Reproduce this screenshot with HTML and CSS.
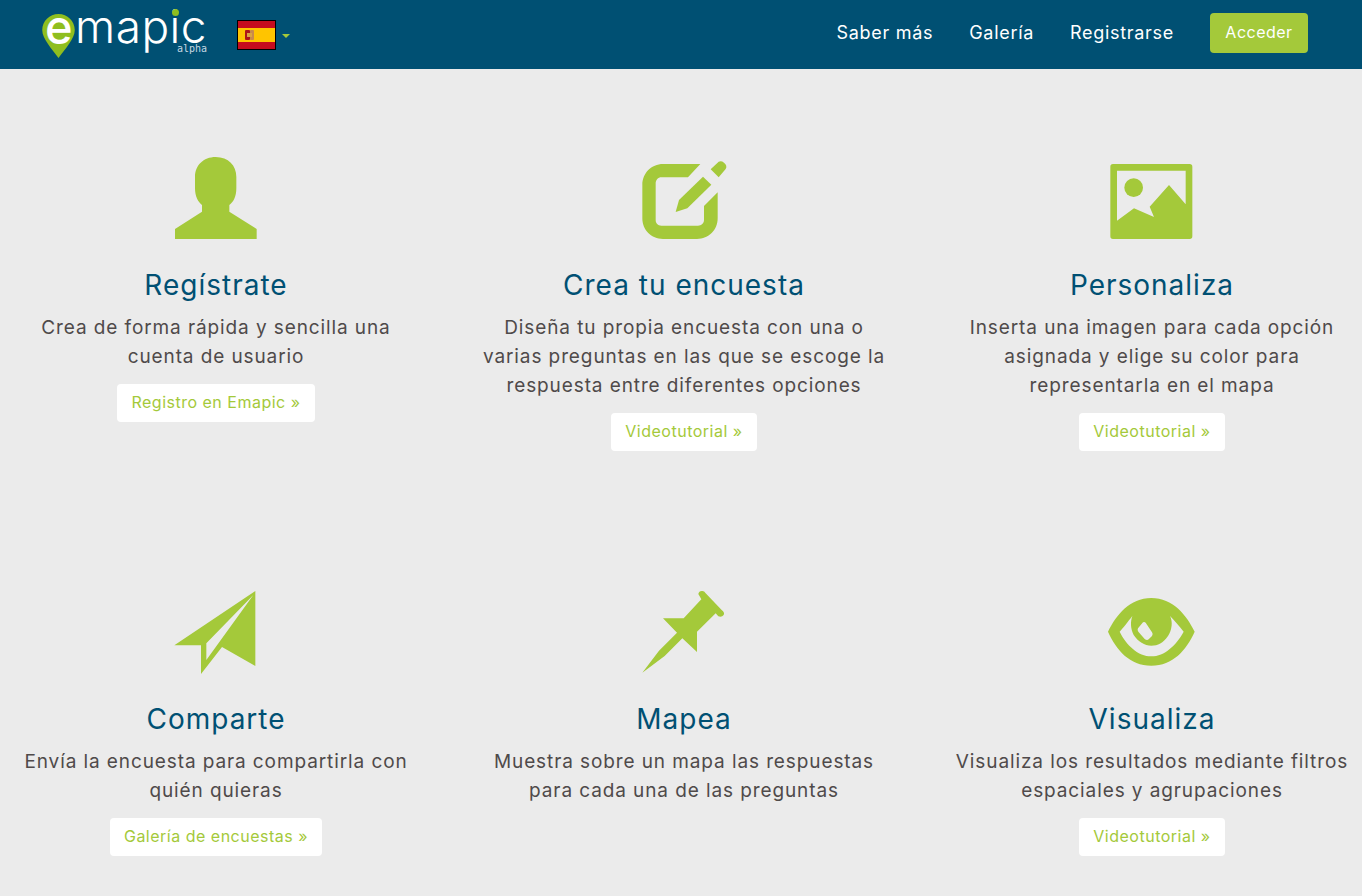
FILE: index.html
```html
<!DOCTYPE html>
<html lang="es">

<head>
    <meta charset="UTF-8">
    <meta name="viewport" content="width=device-width, initial-scale=1.0">
    <title>Emapic</title>
    <link rel="stylesheet" href="styles.css">
</head>

<body>
    <header class="navbar">
        <a class="logo" href="#">
            <svg class="logo-pin" viewBox="0 0 34 46">
                <path d="M17 0C7.6 0 0 7.4 0 16.6 0 26 10 36 17 46 24 36 34 26 34 16.6 34 7.4 26.4 0 17 0Z" />
            </svg>
            <span class="logo-e">e</span>
            <span class="logo-name">map<span class="logo-i">i</span>c</span>
            <span class="logo-alpha">alpha</span>
        </a>
        <a class="lang" href="#">
            <svg class="flag" viewBox="0 0 39 30">
                <rect width="39" height="30" fill="#000" />
                <rect x="1" y="1" width="37" height="28" fill="#c60b1e" />
                <rect x="1" y="8" width="37" height="14" fill="#ffc400" />
                <rect x="8" y="10" width="5" height="10" rx="1" fill="#ad1519" />
                <rect x="13" y="10" width="4" height="10" rx="1" fill="#c98a4b" />
                <rect x="10" y="13" width="5" height="4" fill="#d9a441" />
            </svg>
            <span class="caret"></span>
        </a>
        <nav class="nav">
            <a href="#">Saber más</a>
            <a href="#">Galería</a>
            <a href="#">Registrarse</a>
            <a class="login" href="#">Acceder</a>
        </nav>
    </header>

    <main class="features">
        <section class="feature">
            <svg class="icon" viewBox="3 0 390 315">
                <path d="M197 36C160 36 135 62 135 95V130C135 155 145 172 156 180V200L75 252V282H320V252L238 200V180C250 172 259 155 259 130V95C259 62 235 36 197 36Z" />
            </svg>
            <h2>Regístrate</h2>
            <p>Crea de forma rápida y sencilla una cuenta de usuario</p>
            <a class="more" href="#">Registro en Emapic »</a>
        </section>
        <section class="feature">
            <svg class="icon" viewBox="-2 0 390 315">
                <path d="M242 57H130C95 57 68 85 68 120V220C68 255 95 282 130 282H232C267 282 294 255 294 220V142L253 183V225C253 235 245 242 235 242H125C115 242 108 235 108 225V115C108 105 115 97 125 97H205Z" />
                <path d="M250 95L275 119L203 190L168 201L178 165Z" />
                <path d="M273 73L297 50Q305 46 313 53Q324 62 318 72L297 97Z" />
            </svg>
            <h2>Crea tu encuesta</h2>
            <p>Diseña tu propia encuesta con una o varias preguntas en las que se escoge la respuesta entre diferentes opciones</p>
            <a class="more" href="#">Videotutorial »</a>
        </section>
        <section class="feature">
            <svg class="icon" viewBox="-8 0 390 315">
                <path fill-rule="evenodd" d="M70 57H300Q308 57 308 65V274Q308 282 300 282H70Q62 282 62 274V65Q62 57 70 57ZM82 77V227L133 190L193 216L180 185L238 120L288 178V77Z" />
                <circle cx="132" cy="128" r="28" />
            </svg>
            <h2>Personaliza</h2>
            <p>Inserta una imagen para cada opción asignada y elige su color para representarla en el mapa</p>
            <a class="more" href="#">Videotutorial »</a>
        </section>
        <section class="feature">
            <svg class="icon" viewBox="3 -3 390 315">
                <path fill-rule="evenodd" d="M316 33L73 196H153V282L216 201L316 258ZM310 45L169 190V240Z" />
            </svg>
            <h2>Comparte</h2>
            <p>Envía la encuesta para compartirla con quién quieras</p>
            <a class="more" href="#">Galería de encuestas »</a>
        </section>
        <section class="feature">
            <svg class="icon" viewBox="-2 -3 390 315">
                <path d="M245 58L192 115H130L172 158L118 212L68 278L135 228L188 175L232 216V155L288 100L296 109Q306 113 312 105Q316 98 306 90L258 40Q254 33 248 33Q238 32 236 42Z" />
            </svg>
            <h2>Mapea</h2>
            <p>Muestra sobre un mapa las respuestas para cada una de las preguntas</p>
        </section>
        <section class="feature">
            <svg class="icon" viewBox="-8 -3 390 315">
                <path fill-rule="evenodd" d="M185 54C250 54 290 105 315 155C290 210 250 257 185 257C120 257 80 210 55 155C80 105 120 54 185 54ZM128 108C115 125 100 145 90 155C110 195 145 229 185 229C225 229 260 195 282 155C270 140 255 122 241 108C250 125 247 150 235 168C220 190 205 197 185 197C165 197 145 185 132 165C122 145 122 125 128 108ZM160 127L145 145Q142 150 146 155L165 177Q172 182 177 178L187 168Q191 162 187 157L168 128Q164 124 160 127Z" />
            </svg>
            <h2>Visualiza</h2>
            <p>Visualiza los resultados mediante filtros espaciales y agrupaciones</p>
            <a class="more" href="#">Videotutorial »</a>
        </section>
    </main>
</body>

</html>
```

FILE: styles.css
```css
* {
    box-sizing: border-box;
}

body {
    margin: 0;
    height: 896px;
    overflow: hidden;
    background: #ebebeb;
    color: #4f4a4a;
    font-family: "Inter", "Liberation Sans", sans-serif;
}

a {
    text-decoration: none;
}

.navbar {
    display: flex;
    align-items: center;
    height: 69px;
    padding: 0 54px 0 42px;
    background: #005073;
}

.logo {
    position: relative;
    display: block;
    width: 165px;
    height: 69px;
    color: #fff;
}

.logo-pin {
    position: absolute;
    left: 0;
    top: 14px;
    width: 33px;
    height: 44px;
    fill: #8fbe1f;
}

.logo-e {
    position: absolute;
    left: 3px;
    top: 12px;
    font-size: 47px;
    font-weight: 500;
    line-height: 30px;
}

.logo-name {
    position: absolute;
    left: 33px;
    top: 11px;
    font-size: 46px;
    font-weight: 300;
    line-height: 30px;
    letter-spacing: 0.5px;
}

.logo-i {
    position: relative;
}

/* green dot laid over the white one of the i */
.logo-i::before {
    content: "";
    position: absolute;
    left: 50%;
    top: 11px;
    width: 7px;
    height: 7px;
    margin-left: -3.5px;
    border-radius: 50%;
    background: #8fbe1f;
}

.logo-alpha {
    position: absolute;
    right: 0;
    top: 44px;
    color: #c5d8e2;
    font-family: "DejaVu Sans Mono", monospace;
    font-size: 10px;
    line-height: 9px;
}

.lang {
    display: flex;
    align-items: center;
    margin-left: 30px;
}

.flag {
    display: block;
    width: 39px;
    height: 30px;
}

.caret {
    margin-left: 6px;
    margin-top: 2px;
    border-top: 4px solid #a4c93a;
    border-left: 4px solid transparent;
    border-right: 4px solid transparent;
}

.nav {
    display: flex;
    align-items: center;
    gap: 36px;
    margin-left: auto;
    margin-top: -4px;
    font-size: 18px;
    letter-spacing: 0.7px;
}

.nav a {
    color: #fff;
}

.nav .login {
    width: 98px;
    height: 40px;
    line-height: 38px;
    text-align: center;
    font-size: 16px;
    letter-spacing: 0.5px;
    border-radius: 4px;
    background: #a4c93a;
}

.features {
    display: grid;
    grid-template-columns: repeat(3, 468px);
    grid-template-rows: 434px auto;
    margin-left: -18px;
    padding-top: 76px;
}

.feature {
    display: flex;
    flex-direction: column;
    align-items: center;
    padding: 0 30px;
    text-align: center;
}

.icon {
    display: block;
    flex: none;
    width: 130px;
    height: 105px;
    fill: #a4c93a;
}

h2 {
    margin: 13px 0 0;
    color: #005073;
    font-size: 28px;
    font-weight: 400;
    line-height: 44px;
    letter-spacing: 1px;
}

p {
    margin: 6px 0 0;
    font-size: 19px;
    line-height: 29px;
    letter-spacing: 0.9px;
}

.more {
    margin-top: 13px;
    padding: 0 14px;
    height: 38px;
    line-height: 37px;
    color: #a4c93a;
    font-size: 16px;
    letter-spacing: 0.5px;
    background: #fff;
    border-radius: 4px;
}
```
